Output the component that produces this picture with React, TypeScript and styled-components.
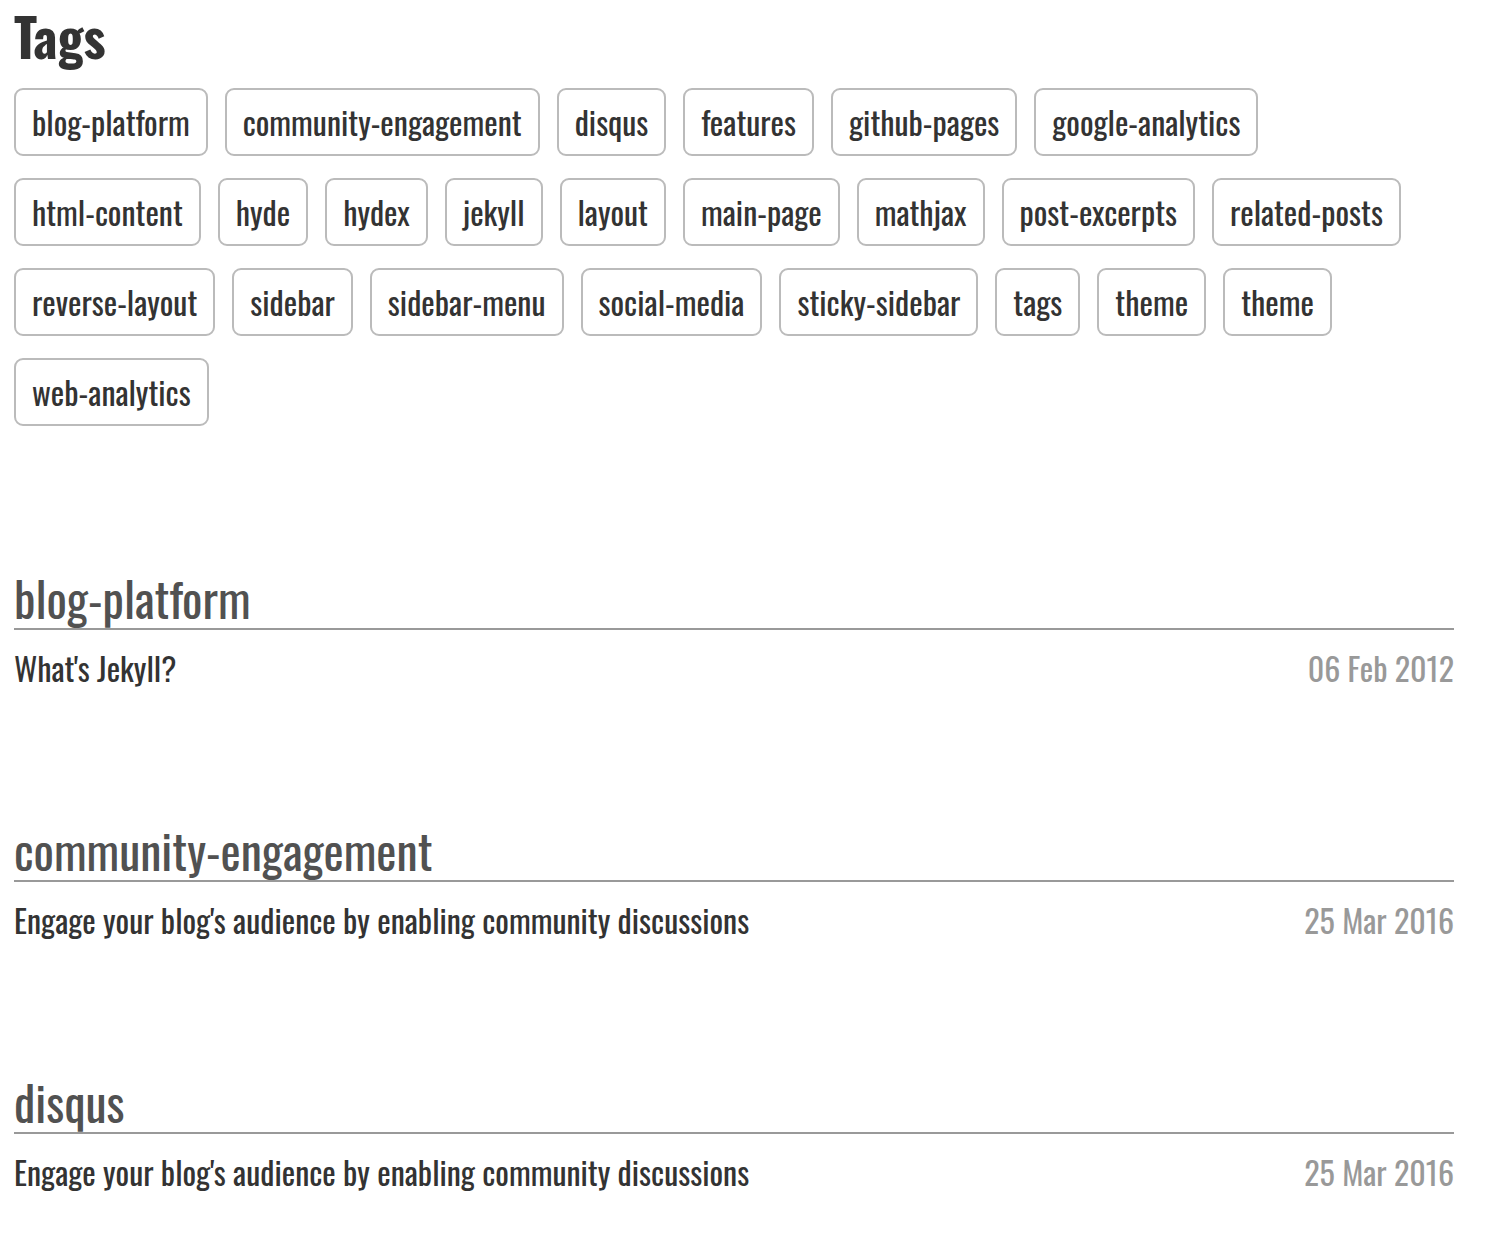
import React from "react";
import styled, { createGlobalStyle } from "styled-components";

const GlobalStyle = createGlobalStyle`
  html, body { margin: 0; padding: 0; background: #fff; }
  body { font-family: Oswald, "Liberation Sans", sans-serif; font-weight: 400; color: #333; }
`;

const Page = styled.main`
  padding: 0 32px 40px 14px;
`;

const Title = styled.h1`
  margin: 2px 0 18px;
  font-size: 52px;
  line-height: 68px;
  font-weight: 700;
  color: #333;
`;

const TagCloud = styled.div`
  display: flex;
  flex-wrap: wrap;
  column-gap: 17px;
  row-gap: 22px;
  margin-bottom: 142px;
`;

const TagButton = styled.a`
  display: inline-block;
  padding: 10px 16px;
  border: 2px solid #bbb;
  border-radius: 9px;
  font-size: 32px;
  line-height: 44px;
  color: #333;
  text-decoration: none;
`;

const Section = styled.section`
  margin-bottom: 130px;
`;

const SectionHeading = styled.h2`
  margin: 0;
  font-size: 48px;
  line-height: 60px;
  font-weight: 400;
  color: #515151;
  border-bottom: 2px solid #999;
`;

const PostList = styled.ul`
  list-style: none;
  margin: 16px 0 0;
  padding: 0;
`;

const PostRow = styled.li`
  display: flex;
  justify-content: space-between;
  align-items: baseline;
  font-size: 32px;
  line-height: 44px;
`;

const PostLink = styled.a`
  color: #333;
  text-decoration: none;
`;

const PostDate = styled.span`
  color: #999;
`;

const tags = [
  "blog-platform",
  "community-engagement",
  "disqus",
  "features",
  "github-pages",
  "google-analytics",
  "html-content",
  "hyde",
  "hydex",
  "jekyll",
  "layout",
  "main-page",
  "mathjax",
  "post-excerpts",
  "related-posts",
  "reverse-layout",
  "sidebar",
  "sidebar-menu",
  "social-media",
  "sticky-sidebar",
  "tags",
  "theme",
  "theme",
  "web-analytics",
];

const sections = [
  { name: "blog-platform", title: "What's Jekyll?", date: "06 Feb 2012" },
  {
    name: "community-engagement",
    title: "Engage your blog's audience by enabling community discussions",
    date: "25 Mar 2016",
  },
  {
    name: "disqus",
    title: "Engage your blog's audience by enabling community discussions",
    date: "25 Mar 2016",
  },
];

export default function App() {
  return (
    <Page>
      <GlobalStyle />
      <Title>Tags</Title>
      <TagCloud>
        {tags.map((t, i) => (
          <TagButton key={i} href={"#" + t}>
            {t}
          </TagButton>
        ))}
      </TagCloud>
      {sections.map((s) => (
        <Section key={s.name} id={s.name}>
          <SectionHeading>{s.name}</SectionHeading>
          <PostList>
            <PostRow>
              <PostLink href="#">{s.title}</PostLink>
              <PostDate>{s.date}</PostDate>
            </PostRow>
          </PostList>
        </Section>
      ))}
    </Page>
  );
}
